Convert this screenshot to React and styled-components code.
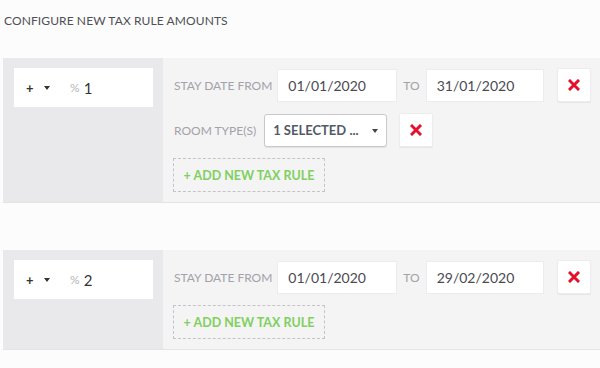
import React from 'react'
import styled, { createGlobalStyle } from 'styled-components'

const GlobalStyle = createGlobalStyle`
body {
  margin: 0;
  background: #fcfcfd;
  font-family: Lato, "Liberation Sans", sans-serif;
}
`

const Page = styled.div`
padding: 13px 0 0 3px;
`

const Heading = styled.div`
font-size: 12px;
color: #4f4f55;
padding-left: 1px;
margin-bottom: 30px;
letter-spacing: 0.1px;
`

const Card = styled.div`
display: flex;
background: #f4f4f5;
border-bottom: 1px solid #e4e4e6;
margin-bottom: ${p => p.gap || 0}px;
`

const LeftCol = styled.div`
width: 160px;
flex-shrink: 0;
background: #e9e9eb;
padding: 10px 10px 10px 11px;
box-sizing: border-box;
`

const AmountBox = styled.div`
width: 139px;
height: 39px;
background: #fff;
display: flex;
align-items: center;
padding-left: 12px;
box-sizing: border-box;
font-size: 15px;
color: #333;
`

const Sign = styled.span`
font-weight: 700;
font-size: 13px;
color: #333;
width: 18px;
`

const Caret = styled.span`
width: 0;
height: 0;
border-left: 3px solid transparent;
border-right: 3px solid transparent;
border-top: 4px solid ${p => p.color || '#333'};
margin: 1px ${p => p.right || 0}px 0 ${p => p.left || 0}px;
`

const Percent = styled.span`
color: #b4b4b8;
font-size: 12px;
margin-right: 4px;
`

const RightCol = styled.div`
flex: 1;
padding: 10px 0 10px 10px;
display: flex;
flex-direction: column;
gap: 11px;
`

const Row = styled.div`
display: flex;
align-items: center;
`

const Label = styled.span`
font-size: 12px;
color: #a2a2a8;
margin: 0 ${p => p.after || 5}px 0 ${p => p.before || 1}px;
`

const DateInput = styled.div`
width: ${p => p.w}px;
height: 33px;
background: #fff;
border: 1px solid #ececee;
box-sizing: border-box;
display: flex;
align-items: center;
padding-left: 10px;
font-size: 14px;
color: #4a4a52;
`

const RemoveButton = styled.button`
width: 34px;
height: 34px;
margin-left: ${p => p.left}px;
background: #fff;
border: 1px solid #ececee;
border-radius: 2px;
box-shadow: 0 1px 1px rgba(0, 0, 0, 0.06);
display: flex;
align-items: center;
justify-content: center;
padding: 0;
`

const Select = styled.div`
width: 123px;
height: 33px;
background: #fff;
border: 1px solid #c9c9cd;
border-radius: 3px;
box-shadow: 0 1px 1px rgba(0, 0, 0, 0.08);
box-sizing: border-box;
display: flex;
align-items: center;
justify-content: space-between;
padding: 0 8px 0 8px;
font-size: 13px;
font-weight: 700;
color: #515a68;
`

const AddButton = styled.div`
width: 152px;
height: 34px;
border: 1px dashed #c4c4c8;
box-sizing: border-box;
display: flex;
align-items: center;
justify-content: center;
font-size: 12.5px;
font-weight: 700;
color: #7fd05e;
`

const Cross = () => (
  <svg width="12" height="12" viewBox="0 0 12 12">
    <path d="M2 2 L10 10 M10 2 L2 10" stroke="#e3112b" strokeWidth="3" strokeLinecap="square" />
  </svg>
)

const Rule = ({ amount, to, roomType, gap }) => (
  <Card gap={gap}>
    <LeftCol>
      <AmountBox>
        <Sign>+</Sign>
        <Caret right={20} />
        <Percent>%</Percent>
        {amount}
      </AmountBox>
    </LeftCol>
    <RightCol>
      <Row>
        <Label>STAY DATE FROM</Label>
        <DateInput w={120}>01/01/2020</DateInput>
        <Label before={6} after={6}>TO</Label>
        <DateInput w={118}>{to}</DateInput>
        <RemoveButton left={13}><Cross /></RemoveButton>
      </Row>
      {roomType && (
        <Row>
          <Label after={8}>ROOM TYPE(S)</Label>
          <Select>
            1 SELECTED ...
            <Caret color="#444" />
          </Select>
          <RemoveButton left={12}><Cross /></RemoveButton>
        </Row>
      )}
      <Row>
        <AddButton>+ ADD NEW TAX RULE</AddButton>
      </Row>
    </RightCol>
  </Card>
)

export default function App() {
  return (
    <Page>
      <GlobalStyle />
      <Heading>CONFIGURE NEW TAX RULE AMOUNTS</Heading>
      <Rule amount="1" to="31/01/2020" roomType gap={47} />
      <Rule amount="2" to="29/02/2020" />
    </Page>
  )
}
